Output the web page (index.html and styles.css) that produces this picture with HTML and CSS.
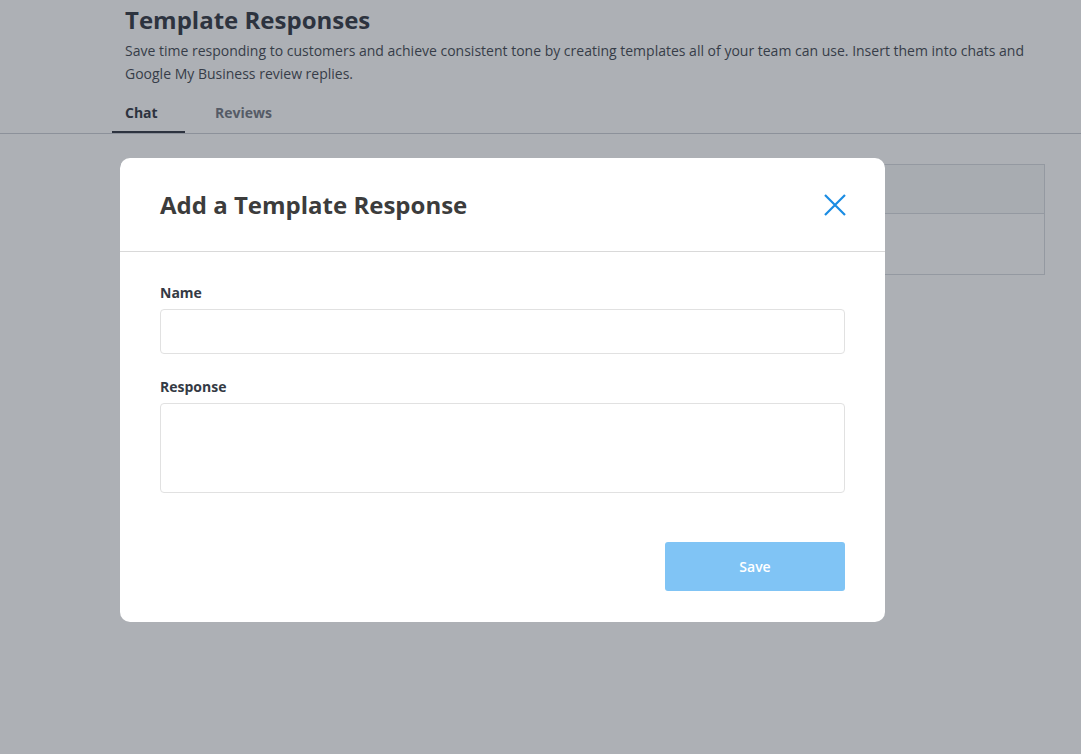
FILE: index.html
```html
<!DOCTYPE html>
<html lang="en">
  <head>
    <meta charset="UTF-8" />
    <title>Template Responses</title>
    <link rel="stylesheet" href="styles.css">
  </head>
  <body>
    <header class="page-head">
      <h1 class="page-title">Template Responses</h1>
      <p class="page-desc">
        Save time responding to customers and achieve consistent tone by creating templates all of your team can use. Insert them into chats and Google My Business review replies.
      </p>
      <nav class="tabs">
        <a class="tab active">Chat</a>
        <a class="tab">Reviews</a>
      </nav>
    </header>

    <section class="list-card">
      <div class="list-head"></div>
      <div class="list-row"></div>
    </section>

    <div class="overlay">
      <div class="modal">
        <div class="modal-head">
          <h2 class="modal-title">Add a Template Response</h2>
          <button class="close" aria-label="Close">
            <svg width="22" height="22" viewBox="0 0 22 22">
              <path d="M1 1 L21 21 M21 1 L1 21" stroke="#1a8ce3" stroke-width="2.2" fill="none" />
            </svg>
          </button>
        </div>
        <form class="modal-body">
          <label class="field-label" for="name">Name</label>
          <input class="field" id="name" type="text" />
          <label class="field-label" for="response">Response</label>
          <textarea class="field area" id="response"></textarea>
          <div class="actions">
            <button type="button" class="save" disabled>Save</button>
          </div>
        </form>
      </div>
    </div>
  </body>
</html>
```

FILE: styles.css
```css
body {
  background: #fff;
  color: #3a3f4a;
  font-family: "Open Sans", sans-serif;
  margin: 0;
}

.page-head {
  border-bottom: 1px solid #c8ccd2;
  padding: 4px 0 0 125px;
}

.page-title {
  font-size: 24px;
  font-weight: 700;
  line-height: 32px;
  margin: 0;
  color: #2b303b;
}

.page-desc {
  font-size: 14px;
  line-height: 23px;
  margin: 3px 0 0;
  max-width: 920px;
}

.tabs {
  display: flex;
  margin: 18px 0 0 -13px;
}

.tab {
  box-sizing: border-box;
  font-size: 14px;
  font-weight: 700;
  line-height: 20px;
  min-width: 73px;
  padding: 0 13px 8px;
  margin-right: 17px;
  color: #6d727c;
  border-bottom: 2px solid transparent;
}

.tab.active {
  color: #2b303b;
  border-bottom-color: #2b303b;
}

.list-card {
  border: 1px solid #d6d9de;
  margin: 30px 36px 0 120px;
}

.list-head {
  height: 48px;
  background: #f7f8f9;
  border-bottom: 1px solid #d6d9de;
}

.list-row {
  height: 60px;
}

.overlay {
  position: fixed;
  inset: 0;
  background: rgba(50, 58, 70, 0.4);
  padding: 158px 0 0 120px;
}

.modal {
  background: #fff;
  width: 765px;
  border-radius: 10px;
  color: #3c3c3c;
}

.modal-head {
  display: flex;
  align-items: center;
  justify-content: space-between;
  height: 93px;
  padding: 0 39px 0 40px;
  border-bottom: 1px solid #d9d9d9;
}

.modal-title {
  font-size: 24px;
  font-weight: 700;
  margin: 0;
}

.close {
  background: none;
  border: 0;
  padding: 0;
  display: flex;
  margin-top: 1px;
}

.modal-body {
  display: flex;
  flex-direction: column;
  padding: 31px 40px 31px;
}

.field-label {
  font-size: 14px;
  font-weight: 700;
  line-height: 20px;
  color: #343a44;
  margin-bottom: 6px;
}

.field {
  box-sizing: border-box;
  height: 45px;
  border: 1px solid #e1e1e1;
  border-radius: 4px;
  font-family: inherit;
  font-size: 14px;
  padding: 10px 12px;
  margin-bottom: 23px;
}

.field.area {
  height: 90px;
  resize: none;
  margin-bottom: 0;
}

.actions {
  display: flex;
  justify-content: flex-end;
  margin-top: 49px;
}

.save {
  width: 180px;
  height: 49px;
  background: #80c4f5;
  color: #fff;
  border: 0;
  border-radius: 3px;
  font-family: inherit;
  font-size: 14px;
  font-weight: 600;
}
```
